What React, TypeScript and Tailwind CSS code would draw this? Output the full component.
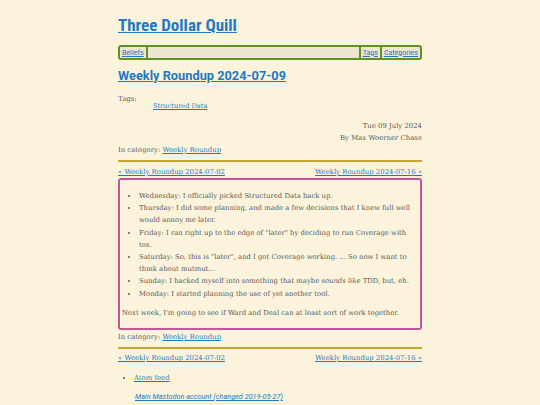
import React from 'react';

const serif = "font-['DejaVu_Serif',serif]";
const sans = "font-['Roboto','Noto_Sans',sans-serif]";

function Link({ children, className = '' }: { children: React.ReactNode; className?: string }) {
  return <a href="#" className={`text-[#1d7bc4] underline ${className}`}>{children}</a>;
}

function PrevNext() {
  return (
    <div className="flex justify-between text-[6.9px] leading-[12px]">
      <Link>« Weekly Roundup 2024-07-02</Link>
      <Link>Weekly Roundup 2024-07-16 »</Link>
    </div>
  );
}

export default function App() {
  const items: React.ReactNode[] = [
    'Wednesday: I officially picked Structured Data back up.',
    'Thursday: I did some planning, and made a few decisions that I knew full well would annoy me later.',
    'Friday: I ran right up to the edge of "later" by deciding to run Coverage with tox.',
    'Saturday: So, this is "later", and I got Coverage working. ... So now I want to think about mutmut...',
    <>Sunday: I backed myself into something that maybe <em>sounds like</em> TDD, but, eh.</>,
    'Monday: I started planning the use of yet another tool.',
  ];

  return (
    <div className={`h-[405px] overflow-hidden bg-[#fcf3dc] text-[#5b5b5b] ${serif}`}>
      <div className="mx-auto w-[304px] pt-[12px]">
        {/* Site title */}
        <h1 className={`${sans} font-stretch-condensed text-[17px] font-bold leading-[26px]`}>
          <Link>Three Dollar Quill</Link>
        </h1>

        {/* Nav bar */}
        <nav className={`${sans} font-stretch-condensed mt-[7px] flex h-[15px] items-center rounded-[3px] border-2 border-[#5e9322] bg-[#ebe5d1] text-[8px]`}>
          <span className="px-[2px]"><Link>Beliefs</Link></span>
          <span className="h-full w-[2px] bg-[#5e9322]" />
          <span className="flex-1" />
          <span className="h-full w-[2px] bg-[#5e9322]" />
          <span className="px-[2px]"><Link>Tags</Link></span>
          <span className="h-full w-[2px] bg-[#5e9322]" />
          <span className="px-[2px]"><Link>Categories</Link></span>
        </nav>

        {/* Post header */}
        <h2 className={`${sans} mt-[8px] text-[12.8px] font-bold leading-[16px]`}>
          <Link>Weekly Roundup 2024-07-09</Link>
        </h2>

        <div className="mt-[12px] text-[7px] leading-[7px]">Tags:</div>
        <div className="pl-[35px] text-[6.6px] leading-[7px]">
          <Link>Structured Data</Link>
        </div>

        <div className="mt-[10px] text-right text-[6.9px] leading-[12px]">
          <div>Tue 09 July 2024</div>
          <div>By Max Woerner Chase</div>
        </div>
        <div className="text-[6.9px] leading-[12px]">
          In category: <Link>Weekly Roundup</Link>
        </div>

        <hr className="mt-[4px] mb-[4px] border-0 border-t-2 border-[#c8a530]" />
        <PrevNext />

        {/* Post body */}
        <article className="rounded-[3px] border-2 border-[#c2559b] pl-[2px] pr-[1px] pt-[10px] pb-[9px] text-[6.85px] leading-[12.2px]">
          <ul className="list-disc pl-[17px]">
            {items.map((item, i) => (
              <li key={i}>{item}</li>
            ))}
          </ul>
          <p className="mt-[7px]">Next week, I'm going to see if Ward and Deal can at least sort of work together.</p>
        </article>

        <div className="mt-[1px] text-[6.9px] leading-[12px]">
          In category: <Link>Weekly Roundup</Link>
        </div>
        <hr className="mt-[4px] mb-[3px] border-0 border-t-2 border-[#c8a530]" />
        <PrevNext />

        {/* Footer */}
        <ul className="mt-[8px] list-disc pl-[16px] text-[6.9px] leading-[12px]">
          <li><Link>Atom feed</Link></li>
        </ul>
        <div className="mt-[7px] pl-[17px] text-[7.3px] italic leading-[12px]">
          <Link className={sans}>Main Mastodon account (changed 2019-05-27)</Link>
        </div>
      </div>
    </div>
  );
}
